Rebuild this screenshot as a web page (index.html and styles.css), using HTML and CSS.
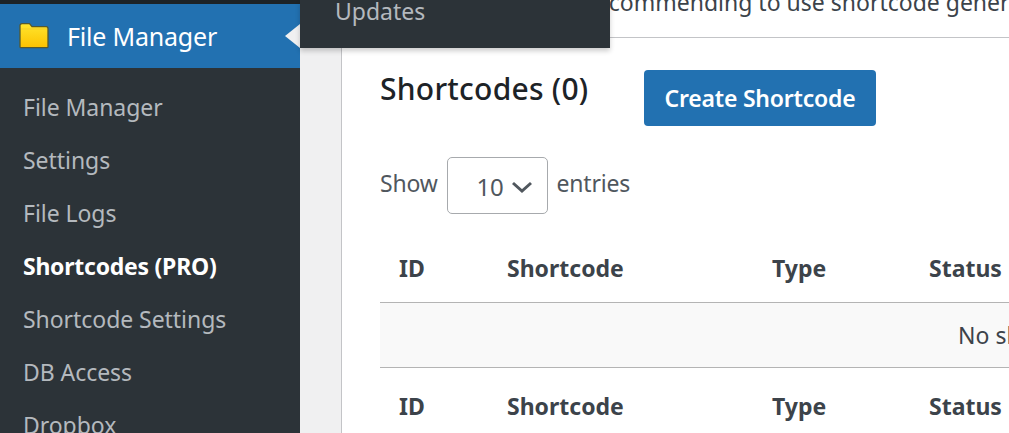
FILE: index.html

```html
<!DOCTYPE html>
<html>
<head lang="en">
    <meta charset="UTF-8">
    <title>Shortcodes</title>
    <link rel="stylesheet" href="styles.css">
</head>
<body>
<div class="page">
    <div class="sidebar">
        <div class="menu-top">
            <svg class="folder" width="30" height="26" viewBox="0 0 30 26">
                <defs>
                    <linearGradient id="fold" x1="0" y1="0" x2="0" y2="1">
                        <stop offset="0" stop-color="#ffe52e"/>
                        <stop offset="1" stop-color="#fcc200"/>
                    </linearGradient>
                </defs>
                <path d="M1 2.5C1 1.4 1.8.7 3 .7h7.5l2.5 3h14c1.2 0 2 .9 2 2v18c0 .6-.5 1-1 1H2c-.6 0-1-.4-1-1z" fill="url(#fold)" stroke="#55592f" stroke-width="1.3"/>
                <path d="M2 6h26" stroke="#f0cf2a" stroke-width="1"/>
            </svg>
            <span class="menu-title">File Manager</span>
            <i class="menu-arrow"></i>
        </div>
        <ul class="submenu">
            <li>File Manager</li>
            <li>Settings</li>
            <li>File Logs</li>
            <li class="current">Shortcodes (PRO)</li>
            <li>Shortcode Settings</li>
            <li>DB Access</li>
            <li>Dropbox</li>
        </ul>
    </div>
    <div class="gutter"></div>
    <div class="content">
        <div class="notice">We are recommending to use shortcode generator for creating shortcodes easily</div>
        <div class="wrap">
            <div class="head">
                <h2>Shortcodes (0)</h2>
                <a class="btn">Create Shortcode</a>
            </div>
            <div class="length">
                <span class="length-label">Show</span>
                <div class="select">
                    <span>10</span>
                    <svg width="22" height="12" viewBox="0 0 22 12"><path d="M2 2l9 8 9-8" fill="none" stroke="#50575e" stroke-width="3"/></svg>
                </div>
                <span class="length-label">entries</span>
            </div>
            <table class="list">
                <thead>
                    <tr><th class="c-id">ID</th><th class="c-code">Shortcode</th><th class="c-type">Type</th><th class="c-status">Status</th><th>Actions</th></tr>
                </thead>
                <tbody>
                    <tr><td colspan="5">No shortcodes found</td></tr>
                </tbody>
                <tfoot>
                    <tr><th>ID</th><th>Shortcode</th><th>Type</th><th>Status</th><th>Actions</th></tr>
                </tfoot>
            </table>
        </div>
    </div>
    <div class="flyout">Updates</div>
</div>
</body>
</html>
```

FILE: styles.css

```css
*{
    margin: 0;
    padding: 0;
    box-sizing: border-box;
}
html,body{
    height: 100%;
    overflow: hidden;
}
body{
    font-family: "Noto Sans", "Open Sans", sans-serif;
    background-color: #f0f0f1;
    color: #3c434a;
}
.page{
    display: flex;
    height: 433px;
    width: 1009px;
    position: relative;
    overflow: hidden;
}
.sidebar{
    width: 300px;
    flex-shrink: 0;
    background-color: #2c3338;
    padding-top: 4px;
    position: relative;
}
.sidebar::before{
    content: "";
    display: block;
    height: 4px;
    margin-top: -4px;
    background-color: #1d2327;
}
.menu-top{
    height: 64px;
    background-color: #2271b1;
    display: flex;
    align-items: center;
    padding-left: 19px;
    position: relative;
}
.folder{
    margin-right: 18px;
}
.menu-title{
    font-size: 25px;
    color: #fff;
    letter-spacing: -0.2px;
}
.menu-arrow{
    position: absolute;
    right: 0;
    top: 20px;
    border: 12px solid transparent;
    border-left: 0;
    border-right: 15px solid #f0f0f1;
}
.submenu{
    list-style: none;
    padding-top: 13px;
}
.submenu li{
    height: 53px;
    line-height: 53px;
    padding-left: 23px;
    font-size: 23px;
    letter-spacing: -0.05px;
    color: #b4b9be;
    white-space: nowrap;
}
.submenu .current{
    color: #fff;
    font-weight: 700;
    letter-spacing: -0.25px;
}
.gutter{
    width: 41px;
    flex-shrink: 0;
}
.content{
    flex: 1;
    background-color: #fff;
    border-left: 1px solid #c3c4c7;
    min-width: 0;
}
.notice{
    height: 38px;
    border-bottom: 1px solid #c3c4c7;
    display: flex;
    align-items: flex-end;
    padding: 0 0 20px 164px;
    font-size: 23px;
    line-height: 30px;
    white-space: nowrap;
}
.wrap{
    padding: 31px 0 0 38px;
    width: 1100px;
}
.head{
    display: flex;
    align-items: flex-start;
}
.head h2{
    font-size: 30px;
    line-height: 40px;
    font-weight: 500;
    color: #1d2327;
    letter-spacing: 0.25px;
    width: 264px;
}
.btn{
    display: block;
    width: 232px;
    height: 56px;
    margin-top: 1px;
    line-height: 56px;
    text-align: center;
    background-color: #2271b1;
    color: #fff;
    font-size: 23px;
    font-weight: 600;
    letter-spacing: -0.2px;
    border-radius: 4px;
}
.length{
    display: flex;
    align-items: center;
    margin-top: 31px;
    font-size: 23px;
    letter-spacing: -0.2px;
    color: #50575e;
}
.length-label{
    margin-bottom: 6px;
}
.select{
    width: 101px;
    height: 57px;
    margin: 0 9px;
    border: 1px solid #a7aaad;
    border-radius: 5px;
    display: flex;
    align-items: center;
    justify-content: flex-end;
    gap: 7px;
    padding: 2px 14px 0 0;
    font-size: 24px;
}
.list{
    width: 1384px;
    margin-top: 21px;
    border-collapse: collapse;
    table-layout: fixed;
}
.list th{
    height: 67px;
    text-align: left;
    padding: 0 0 1px 19px;
    font-size: 23px;
    font-weight: 700;
    color: #3c434a;
    white-space: nowrap;
}
.list .c-id{
    width: 108px;
}
.list .c-code{
    width: 265px;
}
.list .c-type{
    width: 157px;
}
.list .c-status{
    width: 160px;
}
.list thead tr{
    border-bottom: 1px solid #b4b4b4;
}
.list tfoot tr{
    border-top: 1px solid #b4b4b4;
}
.list tfoot th{
    height: 78px;
}
.list td{
    height: 65px;
    background-color: #f9f9f9;
    text-align: center;
    font-size: 23px;
    white-space: nowrap;
}
/* menu flyout lies over the top of the content */
.flyout{
    position: absolute;
    left: 300px;
    top: 0;
    width: 310px;
    height: 48px;
    background-color: #2c3338;
    color: #b4b9be;
    font-size: 23px;
    line-height: 22px;
    padding-left: 35px;
    box-shadow: 0 3px 5px rgba(0,0,0,.2);
}
```
